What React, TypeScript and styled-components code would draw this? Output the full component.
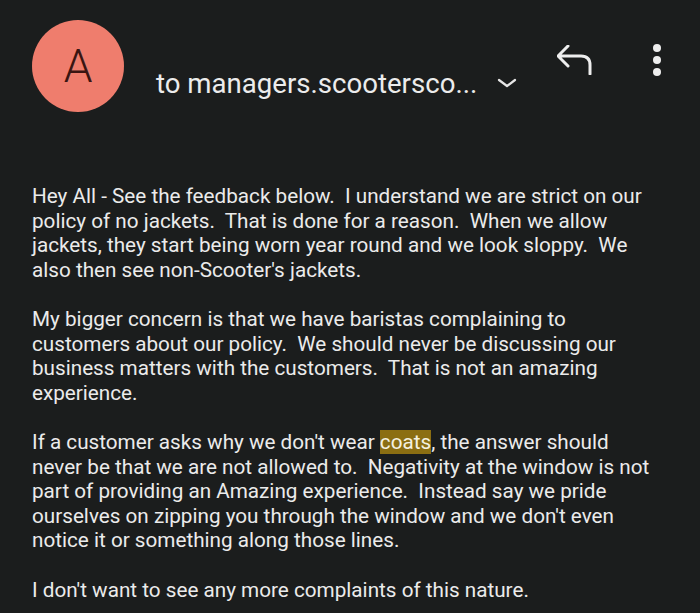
import styled, { createGlobalStyle } from "styled-components";

const Global = createGlobalStyle`
  html, body {
    margin: 0;
    padding: 0;
    background: #1b1d1d;
  }
  body {
    font-family: Roboto, "Noto Sans", sans-serif;
    color: #e9e9e9;
  }
`;

const paragraphs: { lines: (string | { mark: string })[][] }[] = [
  {
    lines: [
      ["Hey All - See the feedback below.  I understand we are strict on our"],
      ["policy of no jackets.  That is done for a reason.  When we allow"],
      ["jackets, they start being worn year round and we look sloppy.  We"],
      ["also then see non-Scooter's jackets."],
    ],
  },
  {
    lines: [
      ["My bigger concern is that we have baristas complaining to"],
      ["customers about our policy.  We should never be discussing our"],
      ["business matters with the customers.  That is not an amazing"],
      ["experience."],
    ],
  },
  {
    lines: [
      ["If a customer asks why we don't wear ", { mark: "coats" }, ", the answer should"],
      ["never be that we are not allowed to.  Negativity at the window is not"],
      ["part of providing an Amazing experience.  Instead say we pride"],
      ["ourselves on zipping you through the window and we don't even"],
      ["notice it or something along those lines."],
    ],
  },
  {
    lines: [["I don't want to see any more complaints of this nature."]],
  },
];

export default function App() {
  return (
    <>
      <Global />
      <S.Page>
        <S.Header>
          <S.Avatar>A</S.Avatar>
          <S.Recipient>
            to managers.scootersco...
            <S.Chevron viewBox="0 0 20 10">
              <path d="M2 2l8 6 8-6" />
            </S.Chevron>
          </S.Recipient>
          <S.Actions>
            <S.ReplyIcon viewBox="0 0 36 30">
              <path d="M11 1L1 11l10 10M2 11h22q9 0 9 9v9" />
            </S.ReplyIcon>
            <S.Kebab>
              <span />
              <span />
              <span />
            </S.Kebab>
          </S.Actions>
        </S.Header>
        <S.Body>
          {paragraphs.map((p, i) => (
            <S.Paragraph key={i}>
              {p.lines.map((line, j) => (
                <S.Line key={j}>
                  {line.map((part, k) =>
                    typeof part === "string" ? part : <S.Mark key={k}>{part.mark}</S.Mark>
                  )}
                </S.Line>
              ))}
            </S.Paragraph>
          ))}
        </S.Body>
      </S.Page>
    </>
  );
}

const S = {
  Page: styled.div`
    width: 700px;
    height: 613px;
    overflow: hidden;
    background: #1b1d1d;
  `,
  Header: styled.div`
    display: flex;
    align-items: flex-start;
    padding: 20px 0 0 32px;
  `,
  Avatar: styled.div`
    width: 92px;
    height: 92px;
    border-radius: 50%;
    background: #ef7d6d;
    color: #3a1512;
    font-size: 46px;
    font-weight: 300;
    display: flex;
    align-items: center;
    justify-content: center;
    flex-shrink: 0;
  `,
  Recipient: styled.div`
    display: flex;
    align-items: center;
    margin: 48px 0 0 32px;
    font-size: 27.6px;
    line-height: 32px;
    color: #ececec;
    white-space: nowrap;
  `,
  Chevron: styled.svg`
    width: 20px;
    height: 10px;
    margin-left: 20px;
    margin-top: -2px;
    fill: none;
    stroke: #e6e6e6;
    stroke-width: 2.2;
    stroke-linecap: round;
    stroke-linejoin: round;
  `,
  Actions: styled.div`
    display: flex;
    align-items: center;
    margin: 24px 0 0 auto;
    padding-right: 39px;
  `,
  ReplyIcon: styled.svg`
    width: 36px;
    height: 30px;
    margin-right: 60px;
    fill: none;
    stroke: #eeeeee;
    stroke-width: 3;
    stroke-linecap: round;
    stroke-linejoin: round;
  `,
  Kebab: styled.div`
    display: flex;
    flex-direction: column;
    align-items: center;
    gap: 4px;
    width: 8px;

    > span {
      width: 8px;
      height: 8px;
      border-radius: 50%;
      background: #eeeeee;
    }
  `,
  Body: styled.div`
    display: flex;
    flex-direction: column;
    gap: 24.6px;
    padding: 72px 0 0 32px;
    font-size: 20.7px;
    line-height: 24.6px;
    color: #ebebeb;
  `,
  Paragraph: styled.div`
    display: flex;
    flex-direction: column;
  `,
  Line: styled.div`
    white-space: pre;
  `,
  Mark: styled.span`
    background: #8b6e12;
    color: #f4f1e0;
  `,
};
